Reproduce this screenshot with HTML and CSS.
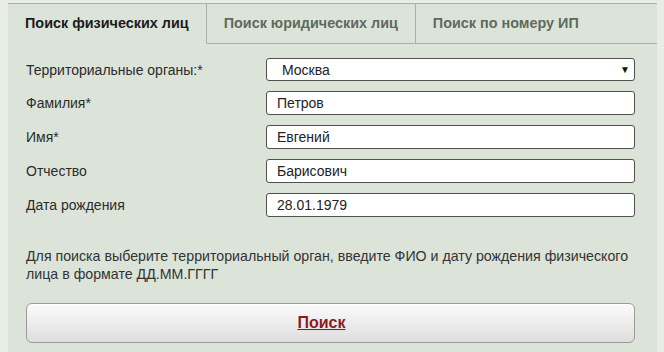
FILE: index.html
```html
<!DOCTYPE html>
<html lang="ru">

<head>
    <meta charset="UTF-8">
    <meta name="viewport" content="width=device-width, initial-scale=1.0">
    <title>Поиск физических лиц</title>
    <link rel="stylesheet" href="styles.css">
</head>

<body>
    <div class="panel">
        <div class="tabs">
            <div class="tab active">Поиск физических лиц</div>
            <div class="tab">Поиск юридических лиц</div>
            <div class="tab last">Поиск по номеру ИП</div>
        </div>
        <form class="search" action="">
            <div class="rows">
                <label>Территориальные органы:*</label>
                <div class="select">
                    <span>Москва</span>
                    <span class="arrow">&#9660;</span>
                </div>
                <label for="surname">Фамилия*</label>
                <input type="text" id="surname" class="input" value="Петров" />
                <label for="name">Имя*</label>
                <input type="text" id="name" class="input" value="Евгений" />
                <label for="patronymic">Отчество</label>
                <input type="text" id="patronymic" class="input" value="Барисович" />
                <label for="birth">Дата рождения</label>
                <input type="text" id="birth" class="input" value="28.01.1979" />
            </div>
            <p class="hint">Для поиска выберите территориальный орган, введите ФИО и дату рождения физического<br>лица в формате ДД.ММ.ГГГГ</p>
            <button type="button" class="btn"><span>Поиск</span></button>
        </form>
    </div>
</body>

</html>
```

FILE: styles.css
```css
* {
    box-sizing: border-box;
    margin: 0;
    padding: 0;
}

body {
    background: #e8eee6;
    font-family: "Liberation Sans", Arial, sans-serif;
    color: #2b2b2b;
}

.panel {
    margin: 3px 7px 0 8px;
    background: #dce4da;
    border-top: 1px solid #a9b1a7;
    height: 349px;
}

.tabs {
    display: flex;
    height: 40px;
}

.tab {
    padding: 0 17px;
    line-height: 39px;
    font-size: 14.4px;
    font-weight: bold;
    color: #5e6a5d;
    border-right: 1px solid #a9b1a7;
    border-bottom: 1px solid #a9b1a7;
}

.tab.active {
    color: #1b1b1b;
    border-bottom-color: transparent;
}

.tab.last {
    flex: 1;
    border-right: none;
}

.search {
    padding: 14px 22px 0 18px;
}

.rows {
    display: grid;
    grid-template-columns: 240px 1fr;
    row-gap: 10px;
    align-items: center;
}

.rows label {
    font-size: 14px;
}

.input,
.select {
    height: 24px;
    border: 1px solid #4f4f4f;
    border-radius: 3px;
    background: #fff;
    font-family: inherit;
    font-size: 14px;
    color: #222;
    padding: 0 10px;
    outline: none;
}

.select {
    height: 23px;
    display: flex;
    align-items: center;
    justify-content: space-between;
    padding: 0 4px 0 15px;
}

.arrow {
    font-size: 10px;
    color: #111;
}

.hint {
    margin-top: 30px;
    font-size: 14.2px;
    line-height: 18px;
    white-space: nowrap;
    color: #333;
}

.btn {
    display: block;
    width: 100%;
    height: 40px;
    margin-top: 20px;
    padding-right: 18px;
    border: 1px solid #9a9a9a;
    border-radius: 6px;
    background: linear-gradient(#fbfbfb, #dedede);
    box-shadow: inset 0 1px 0 #fff;
    font-family: inherit;
    font-size: 16px;
    font-weight: bold;
    cursor: pointer;
}

.btn span {
    color: #8a1c1c;
    text-decoration: underline;
}
```
